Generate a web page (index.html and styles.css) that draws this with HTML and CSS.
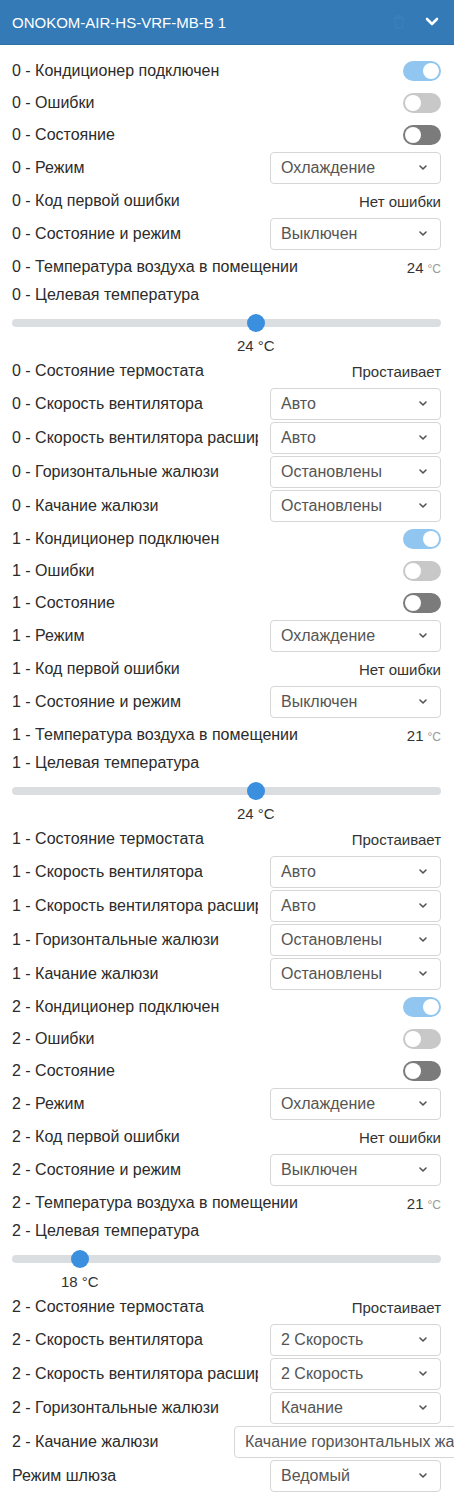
FILE: index.html
```html
<!DOCTYPE html>
<html lang="ru">
<head>
<meta charset="utf-8">
<title>ONOKOM-AIR-HS-VRF-MB-B 1</title>
<link rel="stylesheet" href="styles.css">
</head>
<body>
<div class="page">
  <div class="header">
    <div class="title">ONOKOM-AIR-HS-VRF-MB-B 1</div>
    <svg class="trash" width="12" height="14" viewBox="0 0 12 14"><path d="M1 3h10M4 3V1h4v2M2 3l1 10h6l1-10z"/></svg>
    <svg class="chev" width="14" height="10" viewBox="0 0 14 10"><polyline points="2,2 7,7 12,2"/></svg>
  </div>
  <div class="content">

    <!-- block 0 -->
    <div class="row"><div class="label">0 - Кондиционер подключен</div><div class="toggle toggle--on"><div class="knob"></div></div></div>
    <div class="row"><div class="label">0 - Ошибки</div><div class="toggle toggle--off"><div class="knob"></div></div></div>
    <div class="row"><div class="label">0 - Состояние</div><div class="toggle toggle--dark"><div class="knob"></div></div></div>
    <div class="row row--select"><div class="label">0 - Режим</div><div class="select"><span class="select-text">Охлаждение</span><svg class="sel-chev" width="8" height="6" viewBox="0 0 8 6"><polyline points="1,1 4,4 7,1"/></svg></div></div>
    <div class="row"><div class="label">0 - Код первой ошибки</div><div class="value">Нет ошибки</div></div>
    <div class="row row--select"><div class="label">0 - Состояние и режим</div><div class="select"><span class="select-text">Выключен</span><svg class="sel-chev" width="8" height="6" viewBox="0 0 8 6"><polyline points="1,1 4,4 7,1"/></svg></div></div>
    <div class="row"><div class="label">0 - Температура воздуха в помещении</div><div class="value">24<span class="unit">°C</span></div></div>
    <div class="slider-block">
      <div class="slider-label">0 - Целевая температура</div>
      <div class="slider" style="--p:0.5714">
        <div class="track"></div>
        <div class="thumb"></div>
        <div class="slider-value">24 °C</div>
      </div>
    </div>
    <div class="row"><div class="label">0 - Состояние термостата</div><div class="value">Простаивает</div></div>
    <div class="row row--select"><div class="label">0 - Скорость вентилятора</div><div class="select"><span class="select-text">Авто</span><svg class="sel-chev" width="8" height="6" viewBox="0 0 8 6"><polyline points="1,1 4,4 7,1"/></svg></div></div>
    <div class="row row--select"><div class="label">0 - Скорость вентилятора расширенная</div><div class="select"><span class="select-text">Авто</span><svg class="sel-chev" width="8" height="6" viewBox="0 0 8 6"><polyline points="1,1 4,4 7,1"/></svg></div></div>
    <div class="row row--select"><div class="label">0 - Горизонтальные жалюзи</div><div class="select"><span class="select-text">Остановлены</span><svg class="sel-chev" width="8" height="6" viewBox="0 0 8 6"><polyline points="1,1 4,4 7,1"/></svg></div></div>
    <div class="row row--select"><div class="label">0 - Качание жалюзи</div><div class="select"><span class="select-text">Остановлены</span><svg class="sel-chev" width="8" height="6" viewBox="0 0 8 6"><polyline points="1,1 4,4 7,1"/></svg></div></div>

    <!-- block 1 -->
    <div class="row"><div class="label">1 - Кондиционер подключен</div><div class="toggle toggle--on"><div class="knob"></div></div></div>
    <div class="row"><div class="label">1 - Ошибки</div><div class="toggle toggle--off"><div class="knob"></div></div></div>
    <div class="row"><div class="label">1 - Состояние</div><div class="toggle toggle--dark"><div class="knob"></div></div></div>
    <div class="row row--select"><div class="label">1 - Режим</div><div class="select"><span class="select-text">Охлаждение</span><svg class="sel-chev" width="8" height="6" viewBox="0 0 8 6"><polyline points="1,1 4,4 7,1"/></svg></div></div>
    <div class="row"><div class="label">1 - Код первой ошибки</div><div class="value">Нет ошибки</div></div>
    <div class="row row--select"><div class="label">1 - Состояние и режим</div><div class="select"><span class="select-text">Выключен</span><svg class="sel-chev" width="8" height="6" viewBox="0 0 8 6"><polyline points="1,1 4,4 7,1"/></svg></div></div>
    <div class="row"><div class="label">1 - Температура воздуха в помещении</div><div class="value">21<span class="unit">°C</span></div></div>
    <div class="slider-block">
      <div class="slider-label">1 - Целевая температура</div>
      <div class="slider" style="--p:0.5714">
        <div class="track"></div>
        <div class="thumb"></div>
        <div class="slider-value">24 °C</div>
      </div>
    </div>
    <div class="row"><div class="label">1 - Состояние термостата</div><div class="value">Простаивает</div></div>
    <div class="row row--select"><div class="label">1 - Скорость вентилятора</div><div class="select"><span class="select-text">Авто</span><svg class="sel-chev" width="8" height="6" viewBox="0 0 8 6"><polyline points="1,1 4,4 7,1"/></svg></div></div>
    <div class="row row--select"><div class="label">1 - Скорость вентилятора расширенная</div><div class="select"><span class="select-text">Авто</span><svg class="sel-chev" width="8" height="6" viewBox="0 0 8 6"><polyline points="1,1 4,4 7,1"/></svg></div></div>
    <div class="row row--select"><div class="label">1 - Горизонтальные жалюзи</div><div class="select"><span class="select-text">Остановлены</span><svg class="sel-chev" width="8" height="6" viewBox="0 0 8 6"><polyline points="1,1 4,4 7,1"/></svg></div></div>
    <div class="row row--select"><div class="label">1 - Качание жалюзи</div><div class="select"><span class="select-text">Остановлены</span><svg class="sel-chev" width="8" height="6" viewBox="0 0 8 6"><polyline points="1,1 4,4 7,1"/></svg></div></div>

    <!-- block 2 -->
    <div class="row"><div class="label">2 - Кондиционер подключен</div><div class="toggle toggle--on"><div class="knob"></div></div></div>
    <div class="row"><div class="label">2 - Ошибки</div><div class="toggle toggle--off"><div class="knob"></div></div></div>
    <div class="row"><div class="label">2 - Состояние</div><div class="toggle toggle--dark"><div class="knob"></div></div></div>
    <div class="row row--select"><div class="label">2 - Режим</div><div class="select"><span class="select-text">Охлаждение</span><svg class="sel-chev" width="8" height="6" viewBox="0 0 8 6"><polyline points="1,1 4,4 7,1"/></svg></div></div>
    <div class="row"><div class="label">2 - Код первой ошибки</div><div class="value">Нет ошибки</div></div>
    <div class="row row--select"><div class="label">2 - Состояние и режим</div><div class="select"><span class="select-text">Выключен</span><svg class="sel-chev" width="8" height="6" viewBox="0 0 8 6"><polyline points="1,1 4,4 7,1"/></svg></div></div>
    <div class="row"><div class="label">2 - Температура воздуха в помещении</div><div class="value">21<span class="unit">°C</span></div></div>
    <div class="slider-block">
      <div class="slider-label">2 - Целевая температура</div>
      <div class="slider" style="--p:0.1429">
        <div class="track"></div>
        <div class="thumb"></div>
        <div class="slider-value">18 °C</div>
      </div>
    </div>
    <div class="row"><div class="label">2 - Состояние термостата</div><div class="value">Простаивает</div></div>
    <div class="row row--select"><div class="label">2 - Скорость вентилятора</div><div class="select"><span class="select-text">2 Скорость</span><svg class="sel-chev" width="8" height="6" viewBox="0 0 8 6"><polyline points="1,1 4,4 7,1"/></svg></div></div>
    <div class="row row--select"><div class="label">2 - Скорость вентилятора расширенная</div><div class="select"><span class="select-text">2 Скорость</span><svg class="sel-chev" width="8" height="6" viewBox="0 0 8 6"><polyline points="1,1 4,4 7,1"/></svg></div></div>
    <div class="row row--select"><div class="label">2 - Горизонтальные жалюзи</div><div class="select"><span class="select-text">Качание</span><svg class="sel-chev" width="8" height="6" viewBox="0 0 8 6"><polyline points="1,1 4,4 7,1"/></svg></div></div>
    <div class="row row--select"><div class="label">2 - Качание жалюзи</div><div class="control-wide"><div class="select select--wide"><span class="select-text">Качание горизонтальных жалюзи</span><svg class="sel-chev" width="8" height="6" viewBox="0 0 8 6"><polyline points="1,1 4,4 7,1"/></svg></div></div></div>

    <div class="row row--select"><div class="label">Режим шлюза</div><div class="select"><span class="select-text">Ведомый</span><svg class="sel-chev" width="8" height="6" viewBox="0 0 8 6"><polyline points="1,1 4,4 7,1"/></svg></div></div>
  </div>
</div>
</body>
</html>
```
FILE: styles.css
```css
html, body {
  margin: 0;
  padding: 0;
  background: #fff;
}
body {
  font-family: "Liberation Sans", Arial, sans-serif;
  font-size: 16px;
  color: #2b2b2b;
}
.page {
  width: 454px;
  overflow: hidden;
}
.header {
  height: 45px;
  box-sizing: border-box;
  background: #337ab7;
  border-bottom: 1px solid #2f70a8;
  display: flex;
  align-items: center;
  padding: 0 15px 0 12px;
  color: #fff;
}
.title {
  flex: 1;
  font-size: 15px;
}
.trash {
  margin-right: 20px;
  fill: none;
  stroke: rgba(255, 255, 255, 0.045);
  stroke-width: 1.5;
}
.chev {
  fill: none;
  stroke: #fff;
  stroke-width: 2.6;
  stroke-linecap: round;
  stroke-linejoin: round;
}
.content {
  padding: 10px 13px 0 12px;
}
.row {
  display: flex;
  align-items: center;
  height: 32px;
}
.row--select {
  height: 34px;
}
.label {
  flex: 1;
  min-width: 0;
  overflow: hidden;
  white-space: nowrap;
  margin-right: 12px;
}
.value {
  white-space: nowrap;
  font-size: 15px;
  color: #333;
}
.unit {
  font-size: 12px;
  color: #999;
  margin-left: 4px;
}
.toggle {
  flex: none;
  width: 38px;
  height: 20px;
  border-radius: 10px;
  box-sizing: border-box;
  padding: 2px;
  display: flex;
  justify-content: flex-start;
}
.toggle--on {
  background: #90c6ef;
  justify-content: flex-end;
}
.toggle--off {
  background: #c8c8c8;
}
.toggle--dark {
  background: #7b7b7b;
}
.knob {
  width: 16px;
  height: 16px;
  border-radius: 50%;
  background: #fff;
}
.select {
  flex: none;
  width: 171px;
  height: 32px;
  box-sizing: border-box;
  border: 1px solid #d6d6d6;
  border-radius: 4px;
  background: #fff;
  display: flex;
  align-items: center;
  padding: 0 13px 0 10px;
  color: #555;
  white-space: nowrap;
}
.select-text {
  flex: 1;
}
.sel-chev {
  flex: none;
  fill: none;
  stroke: #555;
  stroke-width: 1.6;
  stroke-linecap: round;
  stroke-linejoin: round;
}
.control-wide {
  flex: none;
  width: 207px;
  display: flex;
}
.select--wide {
  width: max-content;
}
.select--wide .select-text {
  margin-right: 20px;
}
.slider-block {
  height: 72px;
}
.slider-label {
  height: 23px;
  line-height: 23px;
}
.slider {
  position: relative;
  height: 49px;
  box-sizing: border-box;
  padding-top: 13px;
}
.track {
  height: 8px;
  border-radius: 4px;
  background: #dbdee1;
}
.thumb {
  position: absolute;
  top: 8px;
  left: calc((100% - 18px) * var(--p));
  width: 18px;
  height: 18px;
  border-radius: 50%;
  background: #3a8fde;
}
.slider-value {
  position: absolute;
  top: 31px;
  line-height: 17px;
  font-size: 15px;
  left: calc(9px + (100% - 18px) * var(--p));
  transform: translateX(-50%);
  white-space: nowrap;
  color: #333;
}
```
